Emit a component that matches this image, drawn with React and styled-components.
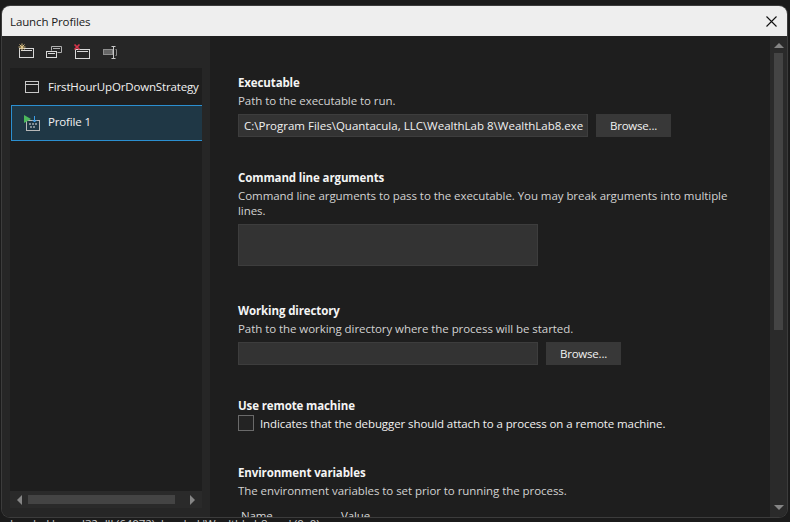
import React from "react";
import styled, { createGlobalStyle } from "styled-components";

const Global = createGlobalStyle`
  html, body { margin: 0; height: 100%; background: #1b1b1b; overflow: hidden; }
  body {
    font-family: "Open Sans", "Noto Sans", sans-serif;
    font-size: 11.5px;
    letter-spacing: -0.12px;
  }
  #root { height: 100%; }
`;

const Page = styled.div`
  width: 790px;
  height: 522px;
  padding: 6px 3px 5px 2px;
  box-sizing: border-box;
  position: relative;
  overflow: hidden;
`;

const Win = styled.div`
  position: relative;
  height: 100%;
  display: flex;
  flex-direction: column;
  border-radius: 8px;
  overflow: hidden;
  background: #1e1e1e;
  box-shadow: 0 0 0 1px #3c3c3c;
`;

const TitleBar = styled.div`
  height: 30px;
  flex: none;
  background: #eeeeee;
  color: #1a1a1a;
  display: flex;
  align-items: center;
  justify-content: space-between;
  padding: 0 10px 0 8px;
`;

const Body = styled.div`
  flex: 1;
  min-height: 0;
  display: flex;
`;

const Side = styled.div`
  width: 208px;
  flex: none;
  background: #262626;
  padding: 0 8px 9px;
  box-sizing: border-box;
  display: flex;
  flex-direction: column;
`;

const Tools = styled.div`
  height: 32px;
  flex: none;
  display: flex;
  align-items: center;
  gap: 8px;
  padding-left: 7px;
`;

const List = styled.div`
  flex: 1;
  background: #1e1e1e;
  display: flex;
  flex-direction: column;
`;

const Item = styled.div`
  height: 37px;
  flex: none;
  display: flex;
  align-items: center;
  gap: 9px;
  padding-left: 15px;
  box-sizing: border-box;
  color: #f1f1f1;
  letter-spacing: -0.16px;
  white-space: nowrap;
  overflow: hidden;
  ${p => p.$selected && `
    height: 36px;
    gap: 8px;
    margin-left: 1px;
    padding-left: 12px;
    background: #1f3745;
    border: 1px solid #2b8fd0;
    border-right: none;
  `}
`;

const ItemLabel = styled.span`
  padding-bottom: ${p => (p.$selected ? 3 : 0)}px;
`;

const HScroll = styled.div`
  height: 17px;
  flex: none;
  background: #2a2a2a;
  display: flex;
  align-items: center;
  padding: 0 5px;
  box-sizing: border-box;
`;

const HThumb = styled.div`
  width: 147px;
  height: 9px;
  background: #444444;
  margin: 0 auto 0 3px;
`;

const Main = styled.div`
  flex: 1;
  min-width: 0;
  padding: 38px 0 0 28px;
  background: #1e1e1e;
  overflow: hidden;
  color: #f1f1f1;
`;

const Section = styled.div`
  height: ${p => p.$height}px;
`;

const Heading = styled.div`
  font-weight: 700;
  line-height: 18px;
  color: #f4f4f4;
`;

const Hint = styled.div`
  line-height: 15px;
  margin-top: 1px;
  width: 500px;
  color: #d2d2d2;
  letter-spacing: -0.06px;
`;

const Row = styled.div`
  display: flex;
  gap: 8px;
  margin-top: 6px;
`;

const Field = styled.div`
  width: ${p => (p.$wide ? 350 : 300)}px;
  height: ${p => p.$height || 23}px;
  flex: none;
  box-sizing: border-box;
  background: #333333;
  border: 1px solid #3d3d3d;
  padding-left: 5px;
  line-height: 21px;
  color: #f1f1f1;
  letter-spacing: 0;
  white-space: nowrap;
  overflow: hidden;
`;

const Browse = styled.div`
  width: 75px;
  height: 23px;
  background: #383838;
  color: #f1f1f1;
  letter-spacing: -0.2px;
  display: flex;
  align-items: center;
  justify-content: center;
`;

const CheckRow = styled.div`
  display: flex;
  align-items: center;
  gap: 6px;
  color: #f1f1f1;
  letter-spacing: -0.09px;
`;

const Box = styled.div`
  width: 16px;
  height: 16px;
  box-sizing: border-box;
  background: #232323;
  border: 1px solid #6a6a6a;
`;

const Columns = styled.div`
  display: flex;
  margin-top: 10px;
  padding-left: 3px;
  color: #d8d8d8;
  line-height: 16px;
`;

const ColName = styled.div`
  width: 100px;
`;

const VScroll = styled.div`
  width: 17px;
  flex: none;
  background: #2a2a2a;
  display: flex;
  flex-direction: column;
  align-items: center;
  padding: 4px 0 5px;
  box-sizing: border-box;
`;

const VThumb = styled.div`
  width: 9px;
  height: 277px;
  background: #444444;
  margin: 3px 0 auto;
`;

const Under = styled.div`
  position: absolute;
  left: 10px;
  top: 516px;
  color: #c8c8c8;
  white-space: pre;
`;

const Arrow = ({ dir }) => {
  const pts = {
    up: "0,8 10,8 5,3",
    down: "0,3 10,3 5,8",
    left: "7,0 7,10 2,5",
    right: "3,0 3,10 8,5",
  };
  return (
    <svg width="10" height="10" viewBox="0 0 10 10" style={{ flex: "none" }}>
      <polygon points={pts[dir]} fill="#858585" />
    </svg>
  );
};

const CloseIcon = () => (
  <svg width="11" height="11" viewBox="0 0 11 11">
    <path d="M.5.5l10 10M10.5.5l-10 10" stroke="#111" strokeWidth="1.1" fill="none" />
  </svg>
);

const ToolIcon = ({ children }) => (
  <svg width="20" height="20" viewBox="0 0 20 20" style={{ flex: "none" }}>
    {children}
  </svg>
);

const AddIcon = () => (
  <ToolIcon>
    <rect x="2.5" y="6.5" width="14" height="9" fill="none" stroke="#d8d8d8" />
    <path d="M4 8.5h11" stroke="#d8d8d8" />
    <path d="M5 1.5v7M1.5 5h7M2.5 2.5l5 5M7.5 2.5l-5 5" stroke="#dcc183" strokeWidth="1" />
  </ToolIcon>
);

const CopyIcon = () => (
  <ToolIcon>
    <path d="M6.5 8.5v-4h10v6h-4" fill="none" stroke="#b0b0b0" />
    <path d="M8 6.5h7" stroke="#b0b0b0" />
    <rect x="1.5" y="9.5" width="10" height="6" fill="#262626" stroke="#d8d8d8" />
    <path d="M3 11.5h7" stroke="#d8d8d8" />
  </ToolIcon>
);

const RemoveIcon = () => (
  <ToolIcon>
    <rect x="2.5" y="7.5" width="14" height="9" fill="none" stroke="#d8d8d8" />
    <path d="M4 9.5h11" stroke="#d8d8d8" />
    <path d="M1.5 2.5l5 5M6.5 2.5l-5 5" stroke="#d8344a" strokeWidth="1.7" />
  </ToolIcon>
);

const RenameIcon = () => (
  <ToolIcon>
    <rect x="2.5" y="7.5" width="9" height="5" fill="#666" stroke="#8e8e8e" />
    <path d="M10.5 4.5h4M10.5 16.5h4M12.5 4.5v12" stroke="#c8c8c8" fill="none" />
    <path d="M14.5 7.5h1v6h-1" stroke="#8a8a8a" fill="none" />
  </ToolIcon>
);

const WindowIcon = () => (
  <svg width="14" height="12" viewBox="0 0 14 12" style={{ flex: "none" }}>
    <rect x="0.5" y="0.5" width="13" height="11" fill="none" stroke="#c8c8c8" />
    <path d="M1 3.5h12" stroke="#c8c8c8" />
  </svg>
);

const ProfileIcon = () => (
  <svg width="16" height="16" viewBox="0 0 16 16" style={{ flex: "none" }}>
    <rect x="2.5" y="5.5" width="13" height="10" fill="#1f3745" stroke="#b8b8b8" />
    <path d="M5 9h2M8 9h2M11 9h2M6 12h2M9 12h2" stroke="#e4e4e4" />
    <polygon points="0,0 7,4 0,8" fill="#4cb85c" />
    <path d="M10.5 1v6M8.5 5l2 2 2-2" stroke="#3c9ee8" fill="none" />
  </svg>
);

export default function App() {
  return (
    <Page>
      <Global />
      <Under>{"Loaded kernel32.dll (64072): Loaded 'WealthLab8.exe' (0x0)"}</Under>
      <Win>
        <TitleBar>
          Launch Profiles
          <CloseIcon />
        </TitleBar>
        <Body>
          <Side>
            <Tools>
              <AddIcon />
              <CopyIcon />
              <RemoveIcon />
              <RenameIcon />
            </Tools>
            <List>
              <Item>
                <WindowIcon />
                <ItemLabel>FirstHourUpOrDownStrategy</ItemLabel>
              </Item>
              <Item $selected>
                <ProfileIcon />
                <ItemLabel $selected>Profile 1</ItemLabel>
              </Item>
            </List>
            <HScroll>
              <Arrow dir="left" />
              <HThumb />
              <Arrow dir="right" />
            </HScroll>
          </Side>
          <Main>
            <Section $height={95}>
              <Heading>Executable</Heading>
              <Hint>Path to the executable to run.</Hint>
              <Row>
                <Field $wide>C:\Program Files\Quantacula, LLC\WealthLab 8\WealthLab8.exe</Field>
                <Browse>Browse...</Browse>
              </Row>
            </Section>
            <Section $height={133}>
              <Heading>Command line arguments</Heading>
              <Hint>Command line arguments to pass to the executable. You may break arguments into multiple lines.</Hint>
              <Row>
                <Field $height={42} />
              </Row>
            </Section>
            <Section $height={95}>
              <Heading>Working directory</Heading>
              <Hint>Path to the working directory where the process will be started.</Hint>
              <Row>
                <Field />
                <Browse>Browse...</Browse>
              </Row>
            </Section>
            <Section $height={67}>
              <Heading>Use remote machine</Heading>
              <CheckRow>
                <Box />
                Indicates that the debugger should attach to a process on a remote machine.
              </CheckRow>
            </Section>
            <Section $height={60}>
              <Heading>Environment variables</Heading>
              <Hint>The environment variables to set prior to running the process.</Hint>
              <Columns>
                <ColName>Name</ColName>
                <div>Value</div>
              </Columns>
            </Section>
          </Main>
          <VScroll>
            <Arrow dir="up" />
            <VThumb />
            <Arrow dir="down" />
          </VScroll>
        </Body>
      </Win>
    </Page>
  );
}
